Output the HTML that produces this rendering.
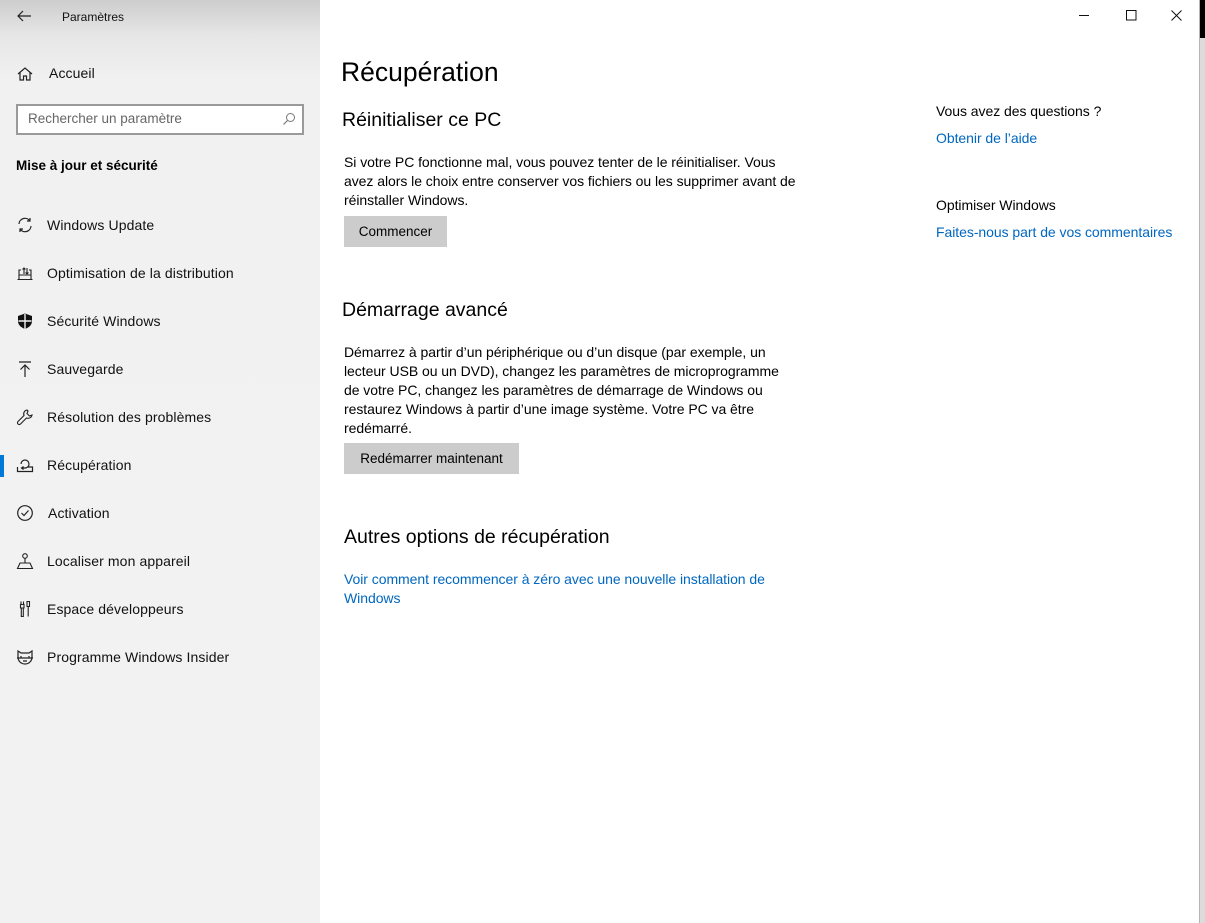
<!DOCTYPE html>
<html><head><meta charset="utf-8"><style>
*{margin:0;padding:0;box-sizing:border-box}
body{width:1205px;height:923px;overflow:hidden;background:#fff;font-family:"Liberation Sans",sans-serif;color:#000;position:relative}
.side{position:absolute;left:0;top:0;width:320px;height:923px;background:linear-gradient(#cdcdcd 0px,#e6e6e6 35px,#f1f1f1 80px,#f2f2f2 100%)}
.t{position:absolute;white-space:nowrap}
.s14{font-size:14px;letter-spacing:-0.05px}
.nav{position:absolute;left:47px;font-size:14px;letter-spacing:0.1px;white-space:nowrap;color:#111}
.ic{position:absolute;left:16px;width:18px;height:18px}
.link{color:#0067c0}
.btn{position:absolute;background:#cccccc;font-size:13.5px;text-align:center;line-height:31px;height:31px}
</style></head><body>
<div class="side">
 <svg class="t" style="left:16px;top:9px" width="16" height="14" viewBox="0 0 16 14"><path d="M15 7H2M7 2L2 7l5 5" fill="none" stroke="#222" stroke-width="1.2"/></svg>
 <div class="t" style="left:62px;top:10px;font-size:12px;color:#111">Paramètres</div>
 <svg class="ic" style="top:65px" viewBox="0 0 18 18"><path d="M2 9L9 3l7 6M4 7.5V15h3.5v-4h3v4H14V7.5" fill="none" stroke="#222" stroke-width="1.2"/></svg>
 <div class="nav" style="left:49px;top:65px;font-size:14px">Accueil</div>
 <div style="position:absolute;left:16px;top:104px;width:288px;height:31px;border:2px solid #9a9a9a;background:#fff"></div>
 <div class="t" style="left:28px;top:111px;font-size:13.5px;color:#666">Rechercher un paramètre</div>
 <svg class="t" style="left:282px;top:112px" width="14" height="14" viewBox="0 0 14 14"><circle cx="8.5" cy="5.5" r="4" fill="none" stroke="#777" stroke-width="1"/><path d="M5.5 8.5L1.5 12.5" stroke="#777" stroke-width="1.2"/></svg>
 <div class="t" style="left:16px;top:158px;font-size:13.5px;font-weight:bold">Mise à jour et sécurité</div>

 <svg class="ic" style="top:216px" viewBox="0 0 18 18"><path d="M3 8a6 6 0 0 1 11-3M15 10a6 6 0 0 1-11 3M14 2v3h-3M4 16v-3h3" fill="none" stroke="#222" stroke-width="1.2"/></svg>
 <div class="nav" style="top:217px">Windows Update</div>
 <svg class="ic" style="top:264px" viewBox="0 0 18 18"><path d="M1.5 15.5h15M3 15.5V11h12v4.5M3 11V6h2M8 10V4M6.5 5.5L8 4l1.5 1.5M11 4v6M9.5 8.5L11 10l1.5-1.5M13 6h2v5" fill="none" stroke="#222" stroke-width="1.1"/></svg>
 <div class="nav" style="top:265px">Optimisation de la distribution</div>
 <svg class="ic" style="top:312px" viewBox="0 0 18 18"><path d="M9 1.5L2 4v5c0 4 3 6.5 7 8 4-1.5 7-4 7-8V4z" fill="#111"/><path d="M9 2v15M2.5 9h13" stroke="#f2f2f2" stroke-width="1.4"/></svg>
 <div class="nav" style="top:313px">Sécurité Windows</div>
 <svg class="ic" style="top:360px" viewBox="0 0 18 18"><path d="M3 2h12M9 17V5M4.5 9.5L9 5l4.5 4.5" fill="none" stroke="#222" stroke-width="1.2"/></svg>
 <div class="nav" style="top:361px">Sauvegarde</div>
 <svg class="ic" style="top:408px" viewBox="0 0 18 18"><path d="M11 2a4 4 0 0 0-3 5.5L2 13.5a1.5 1.5 0 0 0 2.5 2.5l6-6A4 4 0 0 0 16 7l-2.5 1-2.5-2.5 1-2.5z" fill="none" stroke="#222" stroke-width="1.1"/></svg>
 <div class="nav" style="top:409px">Résolution des problèmes</div>
 <div style="position:absolute;left:0;top:455px;width:4px;height:22px;background:#0078d7"></div>
 <svg class="ic" style="top:456px" viewBox="0 0 18 18"><path d="M1.5 11v4.5h15V11H12M5 8a4 4 0 1 1 4 4H6M7.5 10.5L5.5 12l2 1.5" fill="none" stroke="#222" stroke-width="1.2"/></svg>
 <div class="nav" style="top:457px">Récupération</div>
 <svg class="ic" style="top:504px" viewBox="0 0 18 18"><circle cx="9" cy="9" r="7.3" fill="none" stroke="#222" stroke-width="1.2"/><path d="M5.5 9l2.5 2.5 4.5-5" fill="none" stroke="#222" stroke-width="1.2"/></svg>
 <div class="nav" style="left:48px;top:505px">Activation</div>
 <svg class="ic" style="top:552px" viewBox="0 0 18 18"><circle cx="9" cy="4" r="2.3" fill="none" stroke="#222" stroke-width="1.1"/><path d="M9 6.5V11M1.5 16.5L4 11h10l2.5 5.5zM1.5 16.5h15" fill="none" stroke="#222" stroke-width="1.1"/></svg>
 <div class="nav" style="top:553px">Localiser mon appareil</div>
 <svg class="ic" style="top:600px" viewBox="0 0 18 18"><path d="M5 1.5v3M7.5 1.5v3M4.5 4.5h3.5V8H4.5zM5.3 8v8.5h2V8M11 1.5h2.5v5H11zM12.2 6.5v10" fill="none" stroke="#222" stroke-width="1.1"/></svg>
 <div class="nav" style="top:601px">Espace développeurs</div>
 <svg class="ic" style="top:648px" viewBox="0 0 18 18"><path d="M2 3l3 2h8l3-2v6c0 4-3 7-7 7s-7-3-7-7z" fill="none" stroke="#222" stroke-width="1.2"/><path d="M1 10h16M5 8v2M13 8v2M7 13h4" stroke="#222" stroke-width="1.2"/></svg>
 <div class="nav" style="top:649px">Programme Windows Insider</div>
</div>

<svg class="t" style="left:1079px;top:15px" width="10" height="2"><rect width="10" height="1" fill="#111"/></svg>
<svg class="t" style="left:1126px;top:10px" width="11" height="11"><rect x=".5" y=".5" width="9.5" height="9.5" fill="none" stroke="#111"/></svg>
<svg class="t" style="left:1171px;top:10px" width="11" height="11"><path d="M.5 .5l10 10M10.5 .5l-10 10" stroke="#111"/></svg>
<div style="position:absolute;left:1199px;top:0;width:1px;height:923px;background:#b5b5b5"></div>
<div style="position:absolute;left:1200px;top:0;width:5px;height:923px;background:#dcdcdc"></div>
<div style="position:absolute;left:1200px;top:0;width:5px;height:38px;background:#000"></div>

<div class="t" style="left:341px;top:57px;font-size:26.5px">Récupération</div>
<div class="t" style="left:342px;top:109px;font-size:19.5px">Réinitialiser ce PC</div>
<div class="t s14" style="left:344px;top:153px;line-height:19px">Si votre PC fonctionne mal, vous pouvez tenter de le réinitialiser. Vous<br>avez alors le choix entre conserver vos fichiers ou les supprimer avant de<br>réinstaller Windows.</div>
<div class="btn" style="left:344px;top:216px;width:103px">Commencer</div>

<div class="t" style="left:342px;top:299px;font-size:19.5px">Démarrage avancé</div>
<div class="t s14" style="left:344px;top:343px;line-height:19px">Démarrez à partir d’un périphérique ou d’un disque (par exemple, un<br>lecteur USB ou un DVD), changez les paramètres de microprogramme<br>de votre PC, changez les paramètres de démarrage de Windows ou<br>restaurez Windows à partir d’une image système. Votre PC va être<br>redémarré.</div>
<div class="btn" style="left:344px;top:443px;width:175px">Redémarrer maintenant</div>

<div class="t" style="left:344px;top:526px;font-size:19.5px">Autres options de récupération</div>
<div class="t s14 link" style="left:344px;top:570px;line-height:19px">Voir comment recommencer à zéro avec une nouvelle installation de<br>Windows</div>

<div class="t s14" style="left:936px;top:103px">Vous avez des questions ?</div>
<div class="t s14 link" style="left:936px;top:130px">Obtenir de l’aide</div>
<div class="t s14" style="left:936px;top:197px">Optimiser Windows</div>
<div class="t s14 link" style="left:936px;top:224px">Faites-nous part de vos commentaires</div>
</body></html>
